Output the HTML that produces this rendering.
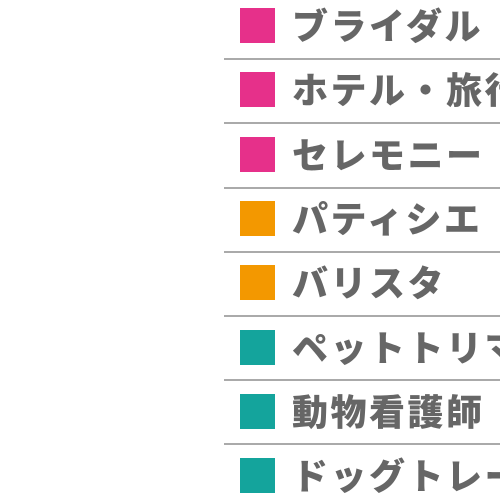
<!DOCTYPE html>
<html><head><meta charset="utf-8"><style>
html,body{margin:0;width:500px;height:500px;overflow:hidden}
body{background:#fff;position:relative;font-family:"Liberation Sans","Noto Sans CJK JP",sans-serif}
#w{position:absolute;left:0;top:0;width:500px;height:500px;overflow:hidden}
.sq{position:absolute;left:240px;width:35px;height:35px}
.t{position:absolute;left:292px;font-size:36px;font-weight:900;color:#666;white-space:nowrap;line-height:42px;letter-spacing:2.5px}
.ln{position:absolute;left:224px;width:276px;height:2px;background:#aaa}
</style></head><body><div id="w">
<div class="sq" style="top:8px;background:#e6308a"></div><div class="t" style="top:6px">ブライダル</div><div class="ln" style="top:58px"></div>
<div class="sq" style="top:72px;background:#e6308a"></div><div class="t" style="top:70px">ホテル・旅行</div><div class="ln" style="top:122px"></div>
<div class="sq" style="top:137px;background:#e6308a"></div><div class="t" style="top:135px">セレモニー</div><div class="ln" style="top:187px"></div>
<div class="sq" style="top:201px;background:#f39800"></div><div class="t" style="top:199px">パティシエ</div><div class="ln" style="top:251px"></div>
<div class="sq" style="top:265px;background:#f39800"></div><div class="t" style="top:263px">バリスタ</div><div class="ln" style="top:315px"></div>
<div class="sq" style="top:330px;background:#14a49c"></div><div class="t" style="top:328px">ペットトリマー</div><div class="ln" style="top:379px"></div>
<div class="sq" style="top:394px;background:#14a49c"></div><div class="t" style="top:392px">動物看護師</div><div class="ln" style="top:443px"></div>
<div class="sq" style="top:458px;background:#14a49c"></div><div class="t" style="top:456px">ドッグトレーナー</div>
</div></body></html>
